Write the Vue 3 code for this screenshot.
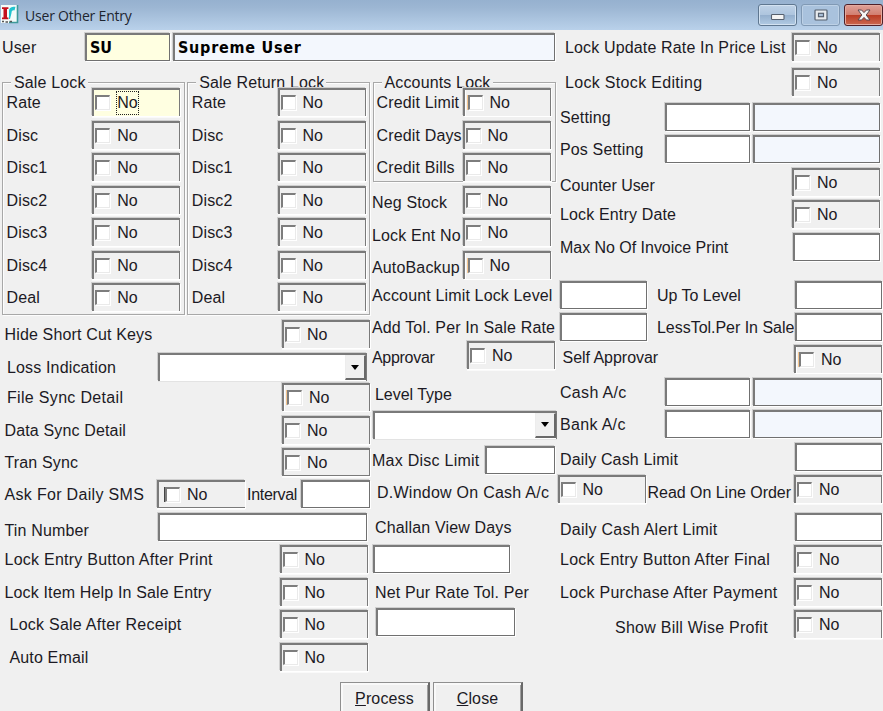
<script setup>
const saleLocks = ['Rate', 'Disc', 'Disc1', 'Disc2', 'Disc3', 'Disc4', 'Deal']
const accountLocks = ['Credit Limit', 'Credit Days', 'Credit Bills']
</script>

<template>
  <div class="window">
    <header class="titlebar">
      <svg class="app-icon" width="18" height="19" viewBox="0 0 18 19">
        <rect x="0" y="0" width="17" height="18" fill="#f4fbfa" />
        <path d="M16.5 0V17.5H8" fill="none" stroke="#3d9a9a" stroke-width="1.6" />
        <path d="M1 2.2H7.4V4H6V12.500H7.400V14.200H1V12.500H2.500V4H1Z" fill="#c40f1c" />
        <path d="M8 14V6C8 2.800 11 1.500 14.500 1.800L13.500 5.500C11.500 5 10.500 6 10.500 8L9 14Z" fill="#22c3cf" />
        <path d="M1 16.500H3M4.500 17H7M8.500 16.500H11" stroke="#555" stroke-width="1.300" />
      </svg>
      <span class="title">User Other Entry</span>
      <div class="win-buttons">
        <button class="win-btn" aria-label="Minimize">
          <svg width="16" height="14" viewBox="0 0 16 14"><rect x="1.500" y="6.500" width="12.500" height="5" rx="0.800" fill="#f4f4f4" stroke="#56606e" stroke-width="1.100" /></svg>
        </button>
        <button class="win-btn faded" aria-label="Maximize">
          <svg width="16" height="14" viewBox="0 0 16 14"><rect x="2" y="2" width="12" height="10" rx="0.800" fill="#e9ecef" stroke="#56606e" stroke-width="1.200" /><rect x="5.500" y="5.300" width="5" height="3.400" fill="#a9bfd7" stroke="#56606e" stroke-width="1.200" /></svg>
        </button>
        <button class="win-btn close" aria-label="Close window">
          <svg width="16" height="14" viewBox="0 0 16 14"><path d="M2 2H5.600L8 4.600L10.400 2H14L10.200 7L14 12H10.400L8 9.400L5.600 12H2L5.800 7Z" fill="#f6f6f6" stroke="#5a4750" stroke-width="1" /></svg>
        </button>
      </div>
    </header>

    <main class="main">
      <section class="west">
        <div class="user-row">
          <span class="lbl">User</span>
          <input class="field code" value="SU" />
          <input class="field name" value="Supreme User" />
        </div>
        <div class="west-cols">
          <div class="left">
            <div class="groups">
              <div v-for="(g, gi) in ['Sale Lock', 'Sale Return Lock']" :key="g" class="group">
                <div class="legend">{{ g }}</div>
                <div class="group-rows">
                  <div v-for="(n, i) in saleLocks" :key="n" class="row">
                    <span class="lbl">{{ n }}</span>
                    <label class="check" :class="{ active: gi === 0 && i === 0 }"><input type="checkbox" /><span>No</span></label>
                  </div>
                </div>
              </div>
            </div>
            <div class="rows left-rows">
              <div class="row"><span class="lbl">Hide Short Cut Keys</span><label class="check"><input type="checkbox" /><span>No</span></label></div>
              <div class="row"><span class="lbl in2">Loss Indication</span><div class="combo loss"><button class="arrow" aria-label="Open list"></button></div></div>
              <div class="row"><span class="lbl in2 loose">File Sync Detail</span><label class="check shifted"><input type="checkbox" /><span>No</span></label></div>
              <div class="row"><span class="lbl">Data Sync Detail</span><label class="check"><input type="checkbox" /><span>No</span></label></div>
              <div class="row"><span class="lbl">Tran Sync</span><label class="check closed"><input type="checkbox" /><span>No</span></label></div>
              <div class="row"><span class="lbl sms loose">Ask For Daily SMS</span><label class="check sms-check"><input type="checkbox" /><span>No</span></label><span class="lbl interval tight">Interval</span><input class="field w69" /></div>
              <div class="row tin"><span class="lbl low">Tin Number</span><input class="field w210" /></div>
              <div class="row back"><span class="lbl wide-text">Lock Entry Button After Print</span><label class="check"><input type="checkbox" /><span>No</span></label></div>
              <div class="row back"><span class="lbl">Lock Item Help In Sale Entry</span><label class="check"><input type="checkbox" /><span>No</span></label></div>
              <div class="row back"><span class="lbl in5 wide-text">Lock Sale After Receipt</span><label class="check"><input type="checkbox" /><span>No</span></label></div>
              <div class="row back"><span class="lbl in5">Auto Email</span><label class="check"><input type="checkbox" /><span>No</span></label></div>
            </div>
          </div>

          <div class="mid">
            <div class="group accounts">
              <div class="legend">Accounts Lock</div>
              <div class="group-rows">
                <div v-for="(n, i) in accountLocks" :key="n" class="row">
                  <span class="lbl">{{ n }}</span>
                  <label class="check" :class="{ shifted: i === 0 }"><input type="checkbox" /><span>No</span></label>
                </div>
              </div>
            </div>
            <div class="rows mid-rows">
              <div class="row inset"><span class="lbl low">Neg Stock</span><label class="check"><input type="checkbox" /><span>No</span></label></div>
              <div class="row inset"><span class="lbl low">Lock Ent No</span><label class="check"><input type="checkbox" /><span>No</span></label></div>
              <div class="row inset"><span class="lbl low">AutoBackup</span><label class="check shifted"><input type="checkbox" /><span>No</span></label></div>
              <div class="row"><span class="lbl">Account Limit Lock Level</span></div>
              <div class="row"><span class="lbl">Add Tol. Per In Sale Rate</span></div>
              <div class="row"><span class="lbl low tight">Approvar</span><label class="check"><input type="checkbox" /><span>No</span></label></div>
              <div class="row"><span class="lbl in3 snug">Level Type</span></div>
              <div class="row level-row"><div class="combo level"><button class="arrow" aria-label="Open list"></button></div></div>
              <div class="row"><span class="lbl wide-text">Max Disc Limit</span><input class="field w70" /></div>
              <div class="row"><span class="lbl in5 low wide-text">D.Window On Cash A/c</span></div>
              <div class="row"><span class="lbl in3">Challan View Days</span></div>
              <div class="row"><input class="field w138" /></div>
              <div class="row"><span class="lbl in3">Net Pur Rate Tol. Per</span></div>
              <div class="row"><input class="field w140" /></div>
            </div>
          </div>
        </div>
      </section>

      <section class="east rows">
        <div class="row near"><span class="lbl in5">Lock Update Rate In Price List</span><label class="check"><input type="checkbox" /><span>No</span></label></div>
        <div class="row near"><span class="lbl in5 loose">Lock Stock Editing</span><label class="check"><input type="checkbox" /><span>No</span></label></div>
        <div class="row near"><span class="lbl">Setting</span><input class="field w85" /><input class="field wide tint" /></div>
        <div class="row near"><span class="lbl">Pos Setting</span><input class="field w85" /><input class="field wide tint" /></div>
        <div class="row near"><span class="lbl low snug">Counter User</span><label class="check"><input type="checkbox" /><span>No</span></label></div>
        <div class="row near"><span class="lbl">Lock Entry Date</span><label class="check"><input type="checkbox" /><span>No</span></label></div>
        <div class="row near"><span class="lbl snug">Max No Of Invoice Print</span><input class="field w88" /></div>
        <div class="row"><input class="field w87" /><span class="lbl second snug">Up To Level</span><input class="field w88" /></div>
        <div class="row"><input class="field w87" /><span class="lbl second snug">LessTol.Per In Sale</span><input class="field w88" /></div>
        <div class="row"><span class="lbl high in2 snug">Self Approvar</span><label class="check shifted"><input type="checkbox" /><span>No</span></label></div>
        <div class="row"><span class="lbl loose">Cash A/c</span><input class="field w85" /><input class="field wider tint" /></div>
        <div class="row"><span class="lbl loose">Bank A/c</span><input class="field w85" /><input class="field wider tint" /></div>
        <div class="row"><span class="lbl low">Daily Cash Limit</span><input class="field w88" /></div>
        <div class="row window-row"><label class="check"><input type="checkbox" /><span>No</span></label><span class="lbl low online snug">Read On Line Order</span><label class="check"><input type="checkbox" /><span>No</span></label></div>
        <div class="row"><span class="lbl low wide-text">Daily Cash Alert Limit</span><input class="field w88" /></div>
        <div class="row"><span class="lbl wide-text">Lock Entry Button After Final</span><label class="check"><input type="checkbox" /><span>No</span></label></div>
        <div class="row"><span class="lbl wide-text">Lock Purchase After Payment</span><label class="check"><input type="checkbox" /><span>No</span></label></div>
        <div class="row"><span class="lbl low profit wide-text">Show Bill Wise Profit</span><label class="check"><input type="checkbox" /><span>No</span></label></div>
      </section>
    </main>

    <footer class="actions">
      <button class="push"><u>P</u>rocess</button>
      <button class="push"><u>C</u>lose</button>
    </footer>
  </div>
</template>

<style>
html, body { margin: 0; overflow: hidden; background: #f0f0f0; }
</style>

<style scoped>
.window {
  width: 883px;
  height: 711px;
  overflow: hidden;
  background: #f0f0f0;
  color: #1c1a24;
  font: 16px/30px "Liberation Sans", Arial, sans-serif;
  letter-spacing: 0.15px;
}
.window * { box-sizing: border-box; }
.titlebar {
  display: flex;
  height: 30px;
  padding: 5px 0 0 1px;
  background: linear-gradient(#96b1cf 0, #9cb6d3 25%, #b9d1ea 100%);
}
.app-icon { flex: none; }
.title {
  margin-left: 6px;
  font: 14px/22px "Open Sans", "Noto Sans", sans-serif;
  letter-spacing: -0.2px;
  color: #1d2530;
}
.win-buttons { display: flex; gap: 4px; margin: -1px 0 0 auto; }
.win-btn {
  display: flex;
  align-items: center;
  justify-content: center;
  width: 39px;
  height: 22px;
  padding: 0;
  border: 1px solid #5f7790;
  border-radius: 3px;
  background: linear-gradient(#bfd2e7 0, #aec5de 48%, #94afcd 50%, #b1cae3 100%);
  box-shadow: inset 0 0 0 1px #d3e2f1;
}
.win-btn.faded { border-color: #8099b4; background: #a9c2dd; box-shadow: inset 0 0 0 1px #bdd1e6; }
.win-btn.close {
  border-color: #4f2029;
  background: linear-gradient(#dfa198 0, #d27f71 48%, #b93a23 50%, #cb6850 100%);
  box-shadow: inset 0 0 0 1px #e5ab9f;
}
.main { display: flex; height: 651.5px; }
.west { width: 557px; }
.user-row { display: flex; height: 52px; padding-top: 3px; }
.user-row .lbl { flex: none; width: 85px; padding-left: 2px; }
.west-cols { display: flex; }
.left { width: 370px; }
.mid { width: 187px; }
.groups { display: flex; gap: 2.5px; padding-left: 2px; }
.group {
  width: 183px;
  height: 232.5px;
  border: 1px solid #a8a8a8;
  box-shadow: inset 1px 1px 0 #fdfdfd, 1px 1px 0 #fdfdfd;
}
.group.accounts { height: 100px; margin-left: 2.5px; }
.legend {
  width: fit-content;
  height: 19px;
  margin: -10px 0 0 8px;
  padding: 0 2px 0 3px;
  background: #f0f0f0;
  line-height: 20px;
}
.group-rows { display: grid; grid-auto-rows: 32.5px; margin-top: -4px; padding: 0 3.5px; }
.accounts .group-rows { padding: 0 4px 0 3px; }
.rows { display: grid; align-content: start; }
.left-rows {
  padding: 5.5px 0 0 4.5px;
  grid-template-rows: 33px 30px 32.5px 32.5px 32px 33px 32px 32.5px 32.5px 32.5px 29px;
}
.mid-rows {
  padding: 3.5px 2px 0 2px;
  grid-template-rows: 32.5px 32.5px 30px 32.5px 27.5px 39.5px 30.5px 35px 29.5px 38px 32px 33px 29.5px 29px;
}
.east {
  width: 326px;
  padding: 3px 1px 0 3px;
  grid-template-rows: 35px 34.5px 32.5px 33px 32px 32.5px 48px 32.5px 32px 32.5px 32.5px 32.5px 32.5px 37.5px 32.5px 32.5px 32.5px 29px;
}
.row { display: flex; align-items: flex-start; min-width: 0; }
.near { padding-right: 2px; }
.inset { padding-right: 4.5px; }
.back { padding-right: 2.5px; }
.tin { padding-right: 3px; }
.window-row { margin-left: -2.5px; }
.lbl { flex: 1 1 0; min-width: 0; white-space: nowrap; }
.in2 { padding-left: 2.5px; }
.in3 { padding-left: 3px; }
.in5 { padding-left: 5px; }
.low { padding-top: 2.5px; }
.high { margin-top: -2.5px; }
.loose { letter-spacing: 0.32px; }
.wide-text { letter-spacing: 0.25px; }
.snug { letter-spacing: -0.03px; }
.tight { letter-spacing: -0.3px; }
.sms { flex: 0 0 152.5px; }
.interval { padding-left: 2px; }
.second { padding-left: 10px; }
.online { padding-left: 2px; }
.profit { padding-left: 55px; }
.field {
  position: relative;
  flex: none;
  height: 28px;
  margin: 0;
  padding: 0 3px 1px;
  border: 2px solid;
  border-width: 2px 1px 1px 2px;
  border-color: #7a7a7a #707070 #707070 #7a7a7a;
  border-radius: 0;
  outline: 0;
  background: #fff;
  box-shadow: 1px 1px 0 #fff, -1px -1px 0 #cfcfcf;
  color: #000;
  font: bold 16px/22px "DejaVu Sans Condensed", "DejaVu Sans", sans-serif;
  font-stretch: condensed;
}
.code { width: 85px; background: #ffffe1; }
.name { width: 382px; margin-left: 3px; background: #f3f7fd; letter-spacing: 0.75px; }
.tint { background: #f3f7fd; margin-left: 3px; }
.w69 { width: 69px; }
.w70 { width: 70px; }
.w85 { width: 85px; }
.w87 { width: 87px; }
.w88 { width: 87.5px; }
.w138 { width: 137px; margin-left: 0.5px; }
.w140 { width: 139px; margin-left: 3.5px; }
.w210 { width: 209.5px; }
.wide { width: 127.5px; }
.wider { width: 129.5px; }
.check {
  position: relative;
  display: flex;
  flex: none;
  width: 88px;
  height: 28px;
  border: solid #7a7a7a;
  border-width: 2px 1px 0 2px;
  background: #f0f0f0;
  box-shadow: 1px 1px 0 #fff, -1px -1px 0 #cfcfcf, 0 2px 0 #fafafa;
}
.check input {
  appearance: none;
  flex: none;
  width: 15px;
  height: 15px;
  margin: 5px 7px 0 1px;
  border: 2px solid;
  border-color: #7d7d7d #eaeaea #eaeaea #7d7d7d;
  border-bottom-width: 1px;
  border-right-width: 1px;
  background: #fff;
  box-shadow: 1px 1px 0 #fff;
}
.check span { height: 22px; margin-top: 2px; line-height: 22px; letter-spacing: 0; }
.check.active { background: #ffffe1; }
.check.active span { outline: 1px dotted #222; }
.check.shifted { box-shadow: 1px 1px 0 #fff, -1px -1px 0 #cfcfcf, inset 1px 0 0 #fff; }
.check.shifted input { margin-left: 3px; box-shadow: -1px 0 0 #f5c58e, 1px 1px 0 #fff; }
.check.closed { border-bottom-width: 1px; }
.sms-check { border-right-width: 0; border-bottom-width: 1px; }
.sms-check input { margin-left: 6px; box-shadow: -1px 0 0 #444, 1px 1px 0 #fff; }
.combo {
  display: flex;
  justify-content: flex-end;
  height: 28px;
  border: solid #7a7a7a;
  border-width: 2px 1px 0 2px;
  background: #fff;
  box-shadow: 0 1px 0 #e3e3e3, -1px -1px 0 #cfcfcf;
}
.loss { width: 209px; margin-right: 3.5px; }
.level { width: 184px; margin-left: 0.5px; }
.level-row { margin-right: -2px; }
.arrow {
  display: flex;
  align-items: center;
  justify-content: center;
  width: 21px;
  height: 25px;
  padding: 0;
  border: 1px solid;
  border-color: #ededed #696969 #696969 #ededed;
  border-bottom-width: 2px;
  border-right-width: 2px;
  background: #f0f0f0;
}
.arrow::after { content: ""; border: 4.5px solid transparent; border-top: 5px solid #000; border-bottom: 0; }
.actions { display: flex; gap: 3px; padding-left: 340px; }
.push {
  width: 90px;
  height: 34px;
  padding: 0;
  border: 1px solid;
  border-color: #8f8f8f #696969 #696969 #8f8f8f;
  border-right-width: 2px;
  background: #f0f0f0;
  box-shadow: inset 2px 2px 0 #f9f9f9, inset -1px -1px 0 #a0a0a0;
  color: #1c1a24;
  font: 16px/30px "Liberation Sans", Arial, sans-serif;
  letter-spacing: 0.15px;
}
</style>
